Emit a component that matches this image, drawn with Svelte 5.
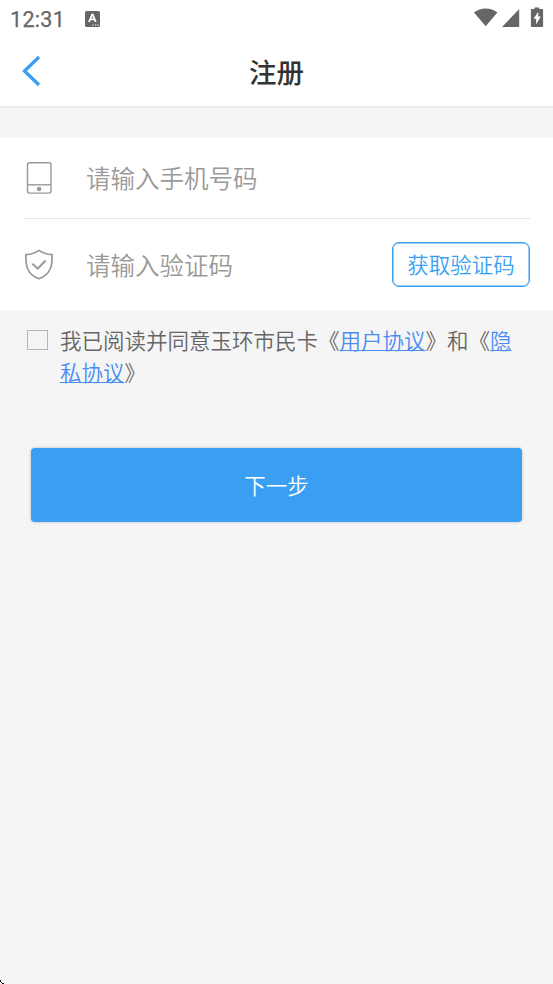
<script>
  let phone = $state('');
  let code = $state('');
  let agreed = $state(false);
</script>

<div class="screen">
  <div class="status">
    <span class="time">12:31</span>
    <svg class="lang" width="15" height="16" viewBox="0 0 15 16">
      <rect width="15" height="16" rx="1.6" fill="#666" />
      <path d="M4 11 7 3.7h.8L10.8 11M5.2 8.4h4.4" fill="none" stroke="#fff" stroke-width="1.8" />
      <path d="M7.5 14h1.3M10 14h1.3M12.3 14h1.3" stroke="#fff" stroke-width="1.2" />
    </svg>
    <svg class="signals" width="72" height="22" viewBox="0 0 72 22">
      <g fill="#666">
        <path d="M0 5.4C3.5 2.7 7.4 1.4 11.7 1.4S20 2.7 23.4 5.4L11.7 19.3Z" />
        <path d="M28 20 45.2 2V20Z" />
        <path d="M60.4 .4h4.800v1.700h2.900q1 0 1 1v16q0 1-1 1h-10.200q-1 0-1-1V3.100q0-1 1-1h2.500Z" />
      </g>
      <path d="M64.200 4.800v4.800h2.600l-4.700 7.600v-5.400h-2.600Z" fill="#fff" />
    </svg>
  </div>

  <header>
    <button class="back" aria-label="返回">
      <svg width="20" height="32" viewBox="0 0 20 32">
        <path d="M17 2 2.500 16 17 30" fill="none" stroke="#3a9ff3" stroke-width="3.300" />
      </svg>
    </button>
    <h1>注册</h1>
  </header>

  <main>
    <section class="form">
      <label class="row first">
        <svg width="32" height="34" viewBox="0 0 32 34" fill="none" stroke="#999" stroke-width="1.400">
          <rect x="4.500" y="1.700" width="23.500" height="30.400" rx="2" />
          <path d="M4.500 23.800H28" />
          <circle cx="16.100" cy="28" r="2.300" fill="#999" stroke="none" />
        </svg>
        <input bind:value={phone} placeholder="请输入手机号码" />
      </label>
      <div class="row second">
        <svg width="32" height="34" viewBox="0 0 32 34" fill="none" stroke="#999" stroke-width="1.700">
          <path d="M16 2.300C12.500 5 7.700 6.300 2.900 6.600C2.500 17 4 26.500 16 30.800C28 26.500 29.400 17 29 6.600C24.200 6.300 19.500 5 16 2.300Z" />
          <path d="M9.300 15.700 14.800 20.700 22.600 12.500" stroke-width="2" />
        </svg>
        <input bind:value={code} placeholder="请输入验证码" />
        <button class="get-code">获取验证码</button>
      </div>
    </section>

    <div class="agreement">
      <input type="checkbox" bind:checked={agreed} aria-label="同意" />
      <p>我已阅读并同意玉环市民卡《<a href="#user">用户协议</a>》和《<a href="#privacy">隐私协议</a>》</p>
    </div>

    <button class="next">下一步</button>
  </main>

  <svg class="corner" width="5" height="4" viewBox="0 0 5 4" shape-rendering="crispEdges">
    <path d="M0 0h1v1h1v1h1v1h1v1H0Z" fill="#fff" />
    <path d="M0 0h1v2H0ZM1 2h1v1H1ZM2 3h2v1H2Z" fill="#111" />
  </svg>
</div>

<style>
  :global(body) {
    margin: 0;
    background: #f5f5f5;
  }
  .screen {
    position: relative;
    height: 984px;
    overflow: hidden;
    background: #f5f5f5;
    font-family: 'Noto Sans CJK SC', sans-serif;
    font-weight: 350;
  }
  button,
  input {
    font: inherit;
    box-sizing: border-box;
    margin: 0;
    padding: 0;
    border: 0;
    background: none;
  }
  svg {
    display: block;
    flex: none;
  }
  .status {
    display: flex;
    align-items: center;
    height: 37px;
    padding: 0 9px 0 10px;
    background: #fff;
    color: #666;
  }
  .time {
    width: 75px;
    font: 400 21.500px/37px Roboto, sans-serif;
    letter-spacing: 0.300px;
    padding-top: 2px;
    box-sizing: border-box;
    -webkit-text-stroke: 0.250px #666;
  }
  .signals {
    margin-left: auto;
    margin-right: -2px;
    padding-bottom: 1px;
  }
  header {
    display: grid;
    grid-template-columns: 60px 1fr 60px;
    align-items: center;
    height: 69px;
    background: #fff;
    border-bottom: 2px solid #ebebeb;
  }
  .back {
    width: 60px;
    height: 60px;
    padding: 0 0 1px 22px;
  }
  h1 {
    margin: 0;
    padding-bottom: 2px;
    text-align: center;
    font-size: 27.500px;
    line-height: 40px;
    font-weight: 500;
    color: #333;
  }
  .form {
    margin-top: 30px;
    padding: 0 23px;
    height: 172px;
    background: #fff;
  }
  .row {
    display: flex;
    align-items: center;
    box-sizing: border-box;
  }
  .first {
    height: 81px;
    border-bottom: 1px solid #e5e5e5;
  }
  .second {
    height: 91px;
  }
  .row input {
    flex: 1;
    min-width: 0;
    height: 40px;
    margin-left: 31px;
    padding-bottom: 2px;
    font-size: 24.500px;
    outline: none;
  }
  .second input {
    padding-bottom: 1px;
  }
  .row input::placeholder {
    color: #999;
    opacity: 1;
  }
  .get-code {
    width: 138px;
    height: 45px;
    padding-bottom: 2px;
    border: 1.500px solid #3a9ff3;
    border-radius: 7px;
    box-shadow: inset 0 0 0 0.500px #3a9ff3;
    color: #3a9ff3;
    font-size: 21.500px;
  }
  .agreement {
    display: flex;
    align-items: flex-start;
    padding: 14px 23px 0 27px;
  }
  .agreement input {
    appearance: none;
    flex: none;
    width: 21px;
    height: 20px;
    margin: 6px 12px 0 0;
    border: 1px solid #b5b5b5;
  }
  .agreement p {
    margin: 0;
    color: #666;
    font-size: 21.500px;
    line-height: 32px;
  }
  .agreement a {
    color: #4b8bf4;
    text-decoration: underline;
    text-decoration-thickness: 1px;
  }
  .next {
    display: block;
    width: 491px;
    height: 74px;
    margin: 60px 0 0 31px;
    padding-bottom: 2px;
    border-radius: 4px;
    background: #3a9ff3;
    box-shadow: 0 0 3px rgba(0, 0, 0, 0.250);
    color: #fff;
    font-size: 21.500px;
  }
  .corner {
    position: absolute;
    left: 0;
    bottom: 0;
  }
</style>
